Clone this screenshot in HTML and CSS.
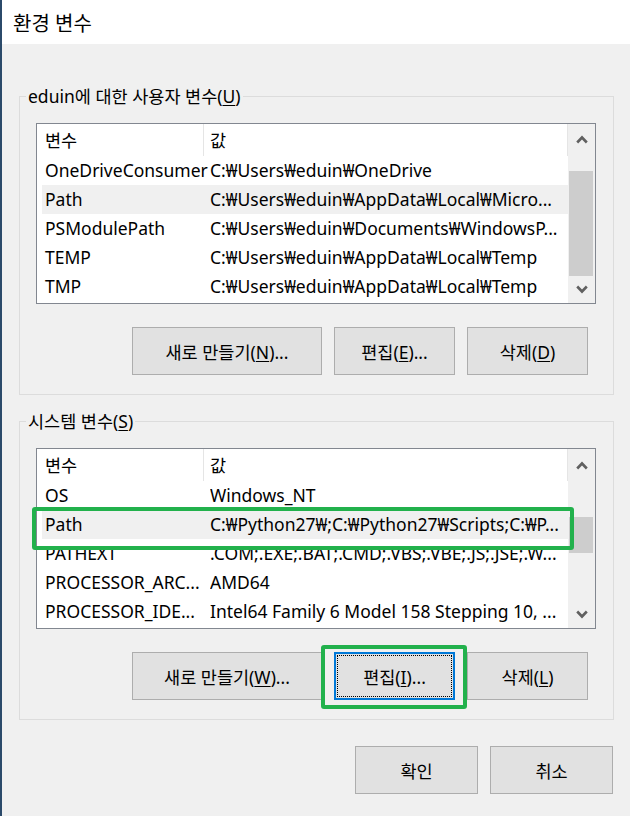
FILE: index.html
```html
<!DOCTYPE html>
<html>
    <head>
        <meta charset="utf-8">
        <link rel="stylesheet" href="styles.css">
    </head>
    <body>
        <div class="window">
            <div class="titlebar">환경 변수</div>

            <fieldset class="group">
                <legend>eduin에 대한 사용자 변수(<u>U</u>)</legend>
                <div class="listview">
                    <div class="list-body">
                        <div class="list-head">
                            <div class="head-name">변수</div>
                            <div class="head-value">값</div>
                        </div>
                        <div class="row"><span class="name">OneDriveConsumer</span><span class="value">C:₩Users₩eduin₩OneDrive</span></div>
                        <div class="row selected"><span class="name">Path</span><span class="value">C:₩Users₩eduin₩AppData₩Local₩Micro...</span></div>
                        <div class="row"><span class="name">PSModulePath</span><span class="value">C:₩Users₩eduin₩Documents₩WindowsP...</span></div>
                        <div class="row"><span class="name">TEMP</span><span class="value">C:₩Users₩eduin₩AppData₩Local₩Temp</span></div>
                        <div class="row"><span class="name">TMP</span><span class="value">C:₩Users₩eduin₩AppData₩Local₩Temp</span></div>
                    </div>
                    <div class="scrollbar">
                        <div class="sb-up"><svg width="12" height="9" viewBox="0 0 12 9"><polyline points="1.2,7.5 6,2.5 10.8,7.5" /></svg></div>
                        <div class="sb-track"><div class="thumb thumb-user"></div></div>
                        <div class="sb-down"><svg width="12" height="9" viewBox="0 0 12 9"><polyline points="1.2,1.5 6,6.5 10.8,1.5" /></svg></div>
                    </div>
                </div>
                <div class="buttons">
                    <button class="btn wide">새로 만들기(<u>N</u>)...</button>
                    <button class="btn">편집(<u>E</u>)...</button>
                    <button class="btn">삭제(<u>D</u>)</button>
                </div>
            </fieldset>

            <fieldset class="group group-system">
                <legend>시스템 변수(<u>S</u>)</legend>
                <div class="listview">
                    <div class="list-body">
                        <div class="list-head">
                            <div class="head-name">변수</div>
                            <div class="head-value">값</div>
                        </div>
                        <div class="row"><span class="name">OS</span><span class="value">Windows_NT</span></div>
                        <div class="row selected"><span class="name">Path</span><span class="value">C:₩Python27₩;C:₩Python27₩Scripts;C:₩P...</span></div>
                        <div class="row"><span class="name">PATHEXT</span><span class="value">.COM;.EXE;.BAT;.CMD;.VBS;.VBE;.JS;.JSE;.W...</span></div>
                        <div class="row"><span class="name">PROCESSOR_ARC...</span><span class="value">AMD64</span></div>
                        <div class="row"><span class="name">PROCESSOR_IDE...</span><span class="value">Intel64 Family 6 Model 158 Stepping 10, ...</span></div>
                    </div>
                    <div class="scrollbar">
                        <div class="sb-up"><svg width="12" height="9" viewBox="0 0 12 9"><polyline points="1.2,7.5 6,2.5 10.8,7.5" /></svg></div>
                        <div class="sb-track"><div class="thumb thumb-system"></div></div>
                        <div class="sb-down"><svg width="12" height="9" viewBox="0 0 12 9"><polyline points="1.2,1.5 6,6.5 10.8,1.5" /></svg></div>
                    </div>
                </div>
                <div class="buttons">
                    <button class="btn wide">새로 만들기(<u>W</u>)...</button>
                    <button class="btn focus">편집(<u>I</u>)...</button>
                    <button class="btn">삭제(<u>L</u>)</button>
                </div>
            </fieldset>

            <div class="footer">
                <button class="btn dialog">확인</button>
                <button class="btn dialog">취소</button>
            </div>

            <div class="mark mark-row"></div>
            <div class="mark mark-button"></div>
        </div>
    </body>
</html>
```

FILE: styles.css
```css
*, *:after, *:before {
    box-sizing: border-box;
    margin: 0;
    padding: 0;
}
body {
    width: 630px;
    height: 816px;
    font-family: "Noto Sans", "Noto Sans CJK KR", sans-serif;
    font-size: 17.5px;
    color: #000;
    background: #f0f0f0;
}
.window {
    position: relative;
    width: 630px;
    height: 816px;
    background: #f0f0f0;
    border-left: 2px solid #2b4a6a;
    overflow: hidden;
}
.titlebar {
    height: 44px;
    background: #FFF;
    display: flex;
    align-items: center;
    padding-left: 11px;
    font-size: 20px;
}

/* group boxes */
.group {
    margin: 40px 16px 0 17px;
    border: 1px solid #dcdcdc;
    padding: 15px 17px 19px 16px;
}
.group-system {
    margin-top: 14px;
}
legend {
    line-height: 24px;
    padding: 0 2px;
    margin-left: -10px;
}
u {
    text-decoration-thickness: 1px;
    text-underline-offset: 2px;
}

/* list view */
.listview {
    display: flex;
    height: 181px;
    border: 1px solid #828790;
    background: #FFF;
}
.list-body {
    flex: 1;
    overflow: hidden;
}
.list-head {
    display: flex;
    height: 32px;
    line-height: 32px;
}
.head-name {
    width: 167px;
    padding-left: 8px;
    border-right: 1px solid #e5e5e5;
}
.head-value {
    flex: 1;
    padding-left: 6px;
    border-right: 1px solid #e5e5e5;
}
.row {
    display: flex;
    height: 29px;
    line-height: 29px;
    margin-left: 5px;
    white-space: nowrap;
}
.row.selected {
    background: #f0f0f0;
}
.name {
    width: 168px;
    padding-left: 3px;
    overflow: hidden;
}
.value {
    flex: 1;
    overflow: hidden;
}

/* scrollbar */
.scrollbar {
    width: 27px;
    display: flex;
    flex-direction: column;
    background: #f0f0f0;
}
.sb-up, .sb-down {
    display: flex;
    align-items: center;
    justify-content: center;
}
.sb-up {
    height: 32px;
}
.sb-down {
    height: 27px;
}
.sb-up svg, .sb-down svg {
    fill: none;
    stroke: #606060;
    stroke-width: 2.6;
}
.sb-track {
    flex: 1;
    padding: 0 2px 0 1px;
}
.thumb {
    background: #cdcdcd;
}
.thumb-user {
    margin-top: 16px;
    height: 105px;
}
.thumb-system {
    margin-top: 36px;
    height: 36px;
}

/* buttons */
.buttons {
    display: flex;
    justify-content: flex-end;
    gap: 12px;
    margin: 23px 8px 0 0;
}
.btn {
    width: 121px;
    height: 48px;
    background: #e1e1e1;
    border: 1px solid #adadad;
    font-family: inherit;
    font-size: 17.5px;
    color: #000;
}
.btn.wide {
    width: 190px;
}
.btn.focus {
    border: 2px solid #0078d7;
    outline: 1px dotted #000;
    outline-offset: -4px;
}
.footer {
    display: flex;
    justify-content: flex-end;
    gap: 12px;
    margin: 26px 17px 0 0;
}
.btn.dialog {
    width: 123px;
}

/* green annotation boxes */
.mark {
    position: absolute;
    border: 4px solid #22b14c;
    border-radius: 3px;
}
.mark-row {
    left: 30px;
    top: 507px;
    width: 542px;
    height: 43px;
}
.mark-button {
    left: 319px;
    top: 645px;
    width: 146px;
    height: 64px;
}
```
